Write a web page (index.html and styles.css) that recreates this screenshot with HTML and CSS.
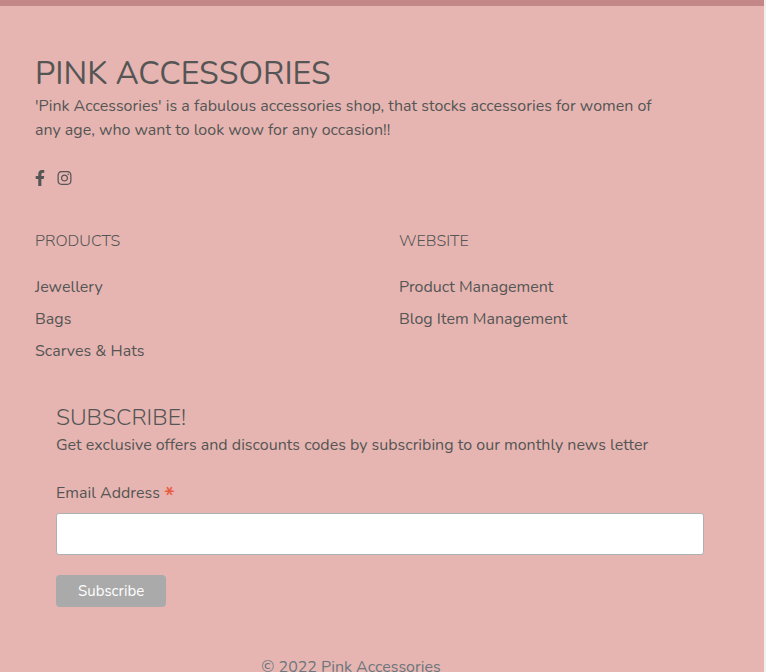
FILE: index.html
```html
<!DOCTYPE html>
<html lang="en">
<head>
<meta charset="utf-8">
<meta name="viewport" content="width=device-width, initial-scale=1">
<title>Pink Accessories</title>
<link rel="stylesheet" href="styles.css">
</head>
<body>
<footer class="footer">
  <section class="about">
    <h1 class="brand">PINK ACCESSORIES</h1>
    <p class="text">'Pink Accessories' is a fabulous accessories shop, that stocks accessories for women of any age, who want to look wow for any occasion!!</p>
    <div class="social">
      <a href="#" aria-label="Facebook"><svg class="icon icon-facebook" viewBox="0 0 320 512" aria-hidden="true"><path d="M279.14 288l14.22-92.66h-88.91v-60.13c0-25.35 12.42-50.06 52.24-50.06h40.42V6.26S260.43 0 225.36 0c-73.22 0-121.08 44.38-121.08 124.72v70.62H22.89V288h81.39v224h100.17V288z"/></svg></a>
      <a href="#" aria-label="Instagram"><svg class="icon icon-instagram" viewBox="0 0 448 512" aria-hidden="true"><path d="M224.1 141c-63.6 0-114.9 51.3-114.9 114.9s51.3 114.9 114.9 114.9S339 319.5 339 255.9 287.7 141 224.1 141zm0 189.6c-41.1 0-74.7-33.5-74.7-74.7s33.5-74.7 74.7-74.7 74.7 33.5 74.7 74.7-33.6 74.7-74.7 74.7zm146.4-194.3c0 14.9-12 26.8-26.8 26.8-14.9 0-26.8-12-26.8-26.8s12-26.8 26.8-26.8 26.8 12 26.8 26.8zm76.1 27.2c-1.7-35.9-9.9-67.7-36.2-93.9-26.2-26.2-58-34.4-93.9-36.2-37-2.1-147.9-2.1-184.9 0-35.8 1.7-67.6 9.9-93.9 36.1s-34.4 58-36.2 93.9c-2.1 37-2.1 147.9 0 184.9 1.7 35.9 9.9 67.7 36.2 93.9s58 34.4 93.9 36.2c37 2.1 147.9 2.1 184.9 0 35.9-1.7 67.7-9.9 93.9-36.2 26.2-26.2 34.4-58 36.2-93.9 2.1-37 2.1-147.8 0-184.8zM398.8 388c-7.8 19.6-22.9 34.7-42.6 42.6-29.5 11.7-99.5 9-132.1 9s-102.7 2.6-132.1-9c-19.6-7.8-34.7-22.9-42.6-42.6-11.7-29.5-9-99.5-9-132.1s-2.6-102.7 9-132.1c7.8-19.6 22.9-34.7 42.6-42.6 29.5-11.7 99.5-9 132.1-9s102.7-2.6 132.1 9c19.6 7.8 34.7 22.9 42.6 42.6 11.7 29.5 9 99.5 9 132.1s2.7 102.7-9 132.1z"/></svg></a>
    </div>
  </section>
  <div class="columns">
    <nav aria-labelledby="products">
      <h2 class="column-title" id="products">PRODUCTS</h2>
      <ul class="links">
        <li><a href="#">Jewellery</a></li>
        <li><a href="#">Bags</a></li>
        <li><a href="#">Scarves &amp; Hats</a></li>
      </ul>
    </nav>
    <nav aria-labelledby="website">
      <h2 class="column-title" id="website">WEBSITE</h2>
      <ul class="links">
        <li><a href="#">Product Management</a></li>
        <li><a href="#">Blog Item Management</a></li>
      </ul>
    </nav>
  </div>
  <form class="subscribe">
    <h2 class="subscribe-title">SUBSCRIBE!</h2>
    <p class="text">Get exclusive offers and discounts codes by subscribing to our monthly news letter</p>
    <label class="label" for="email">Email Address <span class="asterisk">*</span></label>
    <input class="field" type="email" id="email" required>
    <button class="button" type="submit">Subscribe</button>
  </form>
  <p class="copyright">© 2022 Pink Accessories</p>
</footer>
</body>
</html>
```
FILE: styles.css
```css
* {
  box-sizing: border-box;
}

body {
  margin: 0;
  border-right: 2px solid #f1f1f1;
  background: #e6b5b1;
  color: #555;
  font-family: Nunito, Lato, sans-serif;
  font-size: 16px;
  line-height: 24px;
}

h1, h2, p, ul {
  margin: 0;
  padding: 0;
  font-weight: 400;
}

a {
  color: inherit;
  text-decoration: none;
}

.footer {
  border-top: 6px solid #c48787;
  padding: 48px 0 16px 35px;
}

.about {
  max-width: 640px;
}

.brand {
  font-size: 32px;
  line-height: 40px;
}

.social {
  display: flex;
  align-items: center;
  gap: 12px;
  height: 24px;
  margin-top: 24px;
}

.icon {
  display: block;
  height: 16px;
  fill: currentColor;
}

.icon-facebook {
  width: 10px;
}

.icon-instagram {
  width: 15px;
}

.columns {
  display: grid;
  grid-template-columns: 1fr 1fr;
  margin: 40px 1px 0 0;
}

.column-title {
  font-size: 16px;
  font-weight: 300;
  line-height: 22px;
}

.links {
  margin-top: 19px;
  list-style: none;
}

.links li {
  line-height: 32px;
}

.subscribe {
  margin: 36px 60px 0 21px;
}

.subscribe-title {
  font-size: 23px;
  font-weight: 300;
  line-height: 30px;
}

.label {
  display: block;
  height: 24px;
  margin-top: 24px;
}

.asterisk {
  color: #e85c41;
  font-size: 24px;
  font-weight: 600;
  line-height: 24px;
  vertical-align: -6px;
}

.field {
  display: block;
  width: 100%;
  height: 42px;
  margin-top: 8px;
  padding: 8px;
  border: 1px solid #abb0b2;
  border-radius: 3px;
  background: #fff;
  font: inherit;
}

.button {
  display: block;
  height: 32px;
  margin-top: 20px;
  padding: 0 22px;
  border: 0;
  border-radius: 4px;
  background: #aaa;
  color: #fff;
  font: inherit;
  font-size: 15px;
}

.copyright {
  margin: 48px 97px 0 0;
  color: #6c757d;
  text-align: center;
}
```
